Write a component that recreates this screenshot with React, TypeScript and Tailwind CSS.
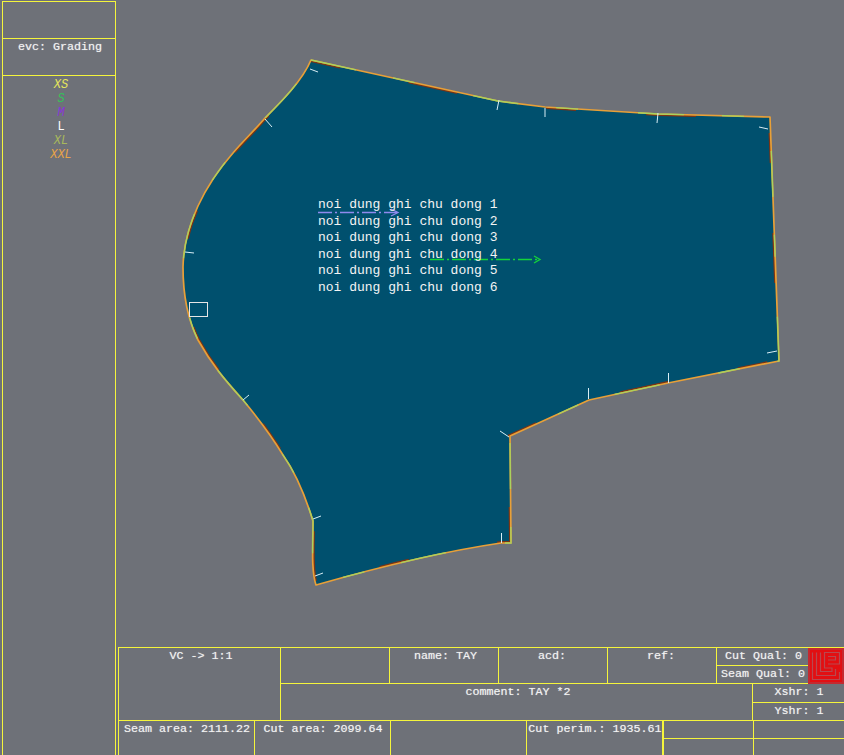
import React from "react";

const OUTLINE =
  "M311 60 L498 101 L545 107 L658 114 L770 117 L779 361 L668 383 L589 400 L510 436 L511 543 L501 543 C460 549 400 561 316 585 C311 570 313 545 313 521 C305 495 295 472 283 455 C272 437 258 418 243 400 C225 380 212 365 198 340 C187 318 183 290 183 267 C184 225 205 185 233 153 C243 141 255 130 265 118 C277 106 302 82 311 60 Z";

const NOTCHES = [
  [310, 69, 318, 72],
  [265, 119, 272, 127],
  [185, 252, 194, 253],
  [243, 400, 249, 395],
  [313, 519, 321, 516],
  [315, 576, 323, 573],
  [501.5, 543, 501.5, 533],
  [509, 437, 500, 431],
  [588.5, 399, 588.5, 388],
  [668.5, 383, 668.5, 373],
  [777, 351, 767, 353],
  [768, 129, 759, 127],
  [658, 113, 657, 123],
  [545, 108, 545, 117],
  [499, 100, 497, 110],
];

const SIZES = [
  { label: "XS", className: "text-[#e4e45c] italic" },
  { label: "S", className: "text-[#35c05a] italic" },
  { label: "M", className: "text-[#8a35d8] italic" },
  { label: "L", className: "text-white" },
  { label: "XL", className: "text-[#a8b85c] italic" },
  { label: "XXL", className: "text-[#e8a448] italic" },
];

const NOTES = [1, 2, 3, 4, 5, 6];

const Cell = ({ className = "", children }: { className?: string; children?: React.ReactNode }) => (
  <div className={`border-[#f5f53c] text-center leading-[17px] whitespace-nowrap ${className}`}>{children}</div>
);

const Logo = () => (
  <svg width="36" height="36" viewBox="0 0 36 36" className="block">
    <rect width="36" height="36" fill="#c42a30" />
    <rect x="2" y="2" width="32" height="32" fill="#e20f12" />
    <g fill="none" stroke="#b8484f" strokeWidth="1.2">
      <path d="M4.5 4.5V31.5H31.5V24" />
      <path d="M8.5 4.5V27.5H27.5V21" />
      <path d="M12.5 4.5V23.5H24V20H16.5V4.5H31.5V16H20" />
      <path d="M20 8.5H27.5V12H20" />
    </g>
  </svg>
);

const Piece = () => (
  <svg viewBox="116 0 728 647" width="728" height="647" className="block">
    <defs>
      <clipPath id="piece-clip">
        <path d={OUTLINE} />
      </clipPath>
    </defs>
    <path d={OUTLINE} fill="#00506e" />
    <path
      d={OUTLINE}
      fill="none"
      stroke="#7c3414"
      strokeWidth="4"
      strokeDasharray="30 70 50 90"
      clipPath="url(#piece-clip)"
    />
    <path d={OUTLINE} fill="none" stroke="#e8a038" strokeWidth="1.7" strokeLinejoin="round" />
    <path d={OUTLINE} fill="none" stroke="#a9d35e" strokeWidth="1.3" strokeDasharray="46 38 22 60" />
    {NOTCHES.map(([x1, y1, x2, y2]) => (
      <line key={`${x1}-${y1}`} x1={x1} y1={y1} x2={x2} y2={y2} stroke="#d8eef5" strokeWidth="1" />
    ))}
    <rect x="189.5" y="302.5" width="18" height="14" fill="none" stroke="#e6e6e6" strokeWidth="1" />
    <g fill="none" stroke="#8f8aee" strokeWidth="1.3">
      <path d="M318 212.5H397" strokeDasharray="14 3 2 3" />
      <path d="M391 209L398 212.5L391 216" />
    </g>
    <g fill="none" stroke="#14d43a" strokeWidth="1.3">
      <path d="M430 259.5H540" strokeDasharray="14 3 2 3" />
      <path d="M534 256L540 259.5L534 263" />
    </g>
  </svg>
);

export default function App() {
  return (
    <div className="flex h-[755px] w-[844px] overflow-hidden bg-[#6e7178] font-['Liberation_Mono',monospace] text-[11.7px] text-[#f2f2f2] [text-shadow:0_0_1px_rgba(255,255,255,0.55)]">
      <aside className="ml-[2px] mt-[1px] flex h-[754px] w-[114px] shrink-0 flex-col border-x border-t border-[#f5f53c]">
        <div className="h-[37px] border-b border-[#f5f53c]" />
        <Cell className="h-[37px] border-b pl-[2px]">evc: Grading</Cell>
        <ul className="pl-[4px] pt-[2px] text-center text-[12px] leading-[14px] [text-shadow:none]">
          {SIZES.map((s) => (
            <li key={s.label} className={s.className}>
              {s.label}
            </li>
          ))}
        </ul>
      </aside>

      <main className="flex w-[728px] flex-col">
        <div className="relative h-[647px]">
          <Piece />
          <div className="absolute left-[202px] top-[197px] text-[13px] leading-[16.6px] whitespace-nowrap text-[#f4f4f4] [text-shadow:none]">
            {NOTES.map((n) => (
              <div key={n}>noi dung ghi chu dong {n}</div>
            ))}
          </div>
        </div>

        <footer className="ml-[2px] flex h-[108px] flex-col border-l border-t border-[#f5f53c]">
          <div className="flex h-[73px] border-b border-[#f5f53c]">
            <Cell className="w-[163px] border-r pl-[3px]">VC -&gt; 1:1</Cell>
            <div className="flex flex-1 flex-col">
              <div className="flex h-[36px] border-b border-[#f5f53c]">
                <Cell className="w-[109px] border-r" />
                <Cell className="w-[109px] border-r pl-[3px]">name: TAY</Cell>
                <Cell className="w-[109px] border-r pr-[2px]">acd:</Cell>
                <Cell className="w-[109px] border-r pr-[2px]">ref:</Cell>
                <div className="flex w-[91px] flex-col">
                  <Cell className="h-[18px] border-b pl-[2px]">Cut Qual: 0</Cell>
                  <Cell className="flex-1 pl-[1px]">Seam Qual: 0</Cell>
                </div>
                <div className="h-[36px] w-[36px]">
                  <Logo />
                </div>
              </div>
              <div className="flex flex-1">
                <Cell className="w-[472px] border-r pl-[3px]">comment: TAY *2</Cell>
                <div className="flex flex-1 flex-col">
                  <Cell className="h-[19px] border-b pl-[1px]">Xshr: 1</Cell>
                  <Cell className="flex-1 pl-[1px]">Yshr: 1</Cell>
                </div>
              </div>
            </div>
          </div>
          <div className="flex flex-1">
            <Cell className="w-[136px] border-r pl-[1px]">Seam area: 2111.22</Cell>
            <Cell className="w-[136px] border-r pl-[1px]">Cut area: 2099.64</Cell>
            <Cell className="w-[136px] border-r" />
            <Cell className="w-[137px] border-r-2 pl-[1px]">Cut perim.: 1935.61</Cell>
            <div className="flex w-[90px] flex-col border-r border-[#f5f53c]">
              <Cell className="h-[18px] border-b" />
            </div>
            <div className="flex flex-1 flex-col">
              <Cell className="h-[18px] border-b" />
            </div>
          </div>
        </footer>
      </main>
    </div>
  );
}
